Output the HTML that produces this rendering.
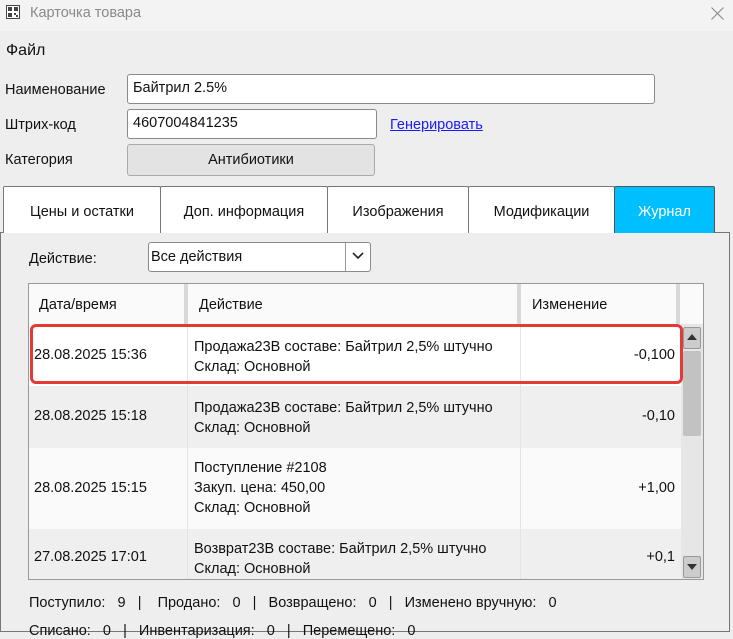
<!DOCTYPE html><html><head><meta charset="utf-8"><style>
*{margin:0;padding:0;box-sizing:border-box}
body{width:733px;height:625px;overflow:hidden;background:#eeeeee;font-family:"Liberation Sans",sans-serif;font-size:14.5px;color:#111;position:relative}
.a{position:absolute;white-space:nowrap}
.box{position:absolute;border:1px solid #8a8a8a;border-radius:3px;background:#fff}
.tab{position:absolute;top:186px;height:47px;border:1px solid #777;border-bottom:none;background:#fff;text-align:center;line-height:50px;font-size:14.5px;border-radius:2px 2px 0 0}
.cell{position:absolute;white-space:nowrap}
</style></head><body>
<div class="a" style="left:0;top:0;width:733px;height:31px;background:#f3f3f3"></div>
<svg class="a" style="left:6px;top:5px" width="14" height="14" viewBox="0 0 14 14"><rect x="0.5" y="0.5" width="13" height="13" fill="#fff" stroke="#444"/><rect x="2" y="2" width="4" height="4" fill="#444"/><rect x="8" y="2" width="4" height="4" fill="#444"/><rect x="2" y="8" width="4" height="4" fill="#444"/><rect x="8" y="8" width="2" height="2" fill="#444"/><rect x="10" y="10" width="2" height="2" fill="#444"/></svg>
<div class="a" style="left:30px;top:5px;color:#8a8a8a;font-size:14.5px">Карточка товара</div>
<svg class="a" style="left:711px;top:7px" width="13" height="13"><path d="M0.5 0.5L12.5 12.5M12.5 0.5L0.5 12.5" stroke="#888" stroke-width="1.1"/></svg>
<div class="a" style="left:6px;top:42px;font-size:16px">Файл</div>
<div class="a" style="left:5px;top:82px">Наименование</div>
<div class="box" style="left:127px;top:74px;width:528px;height:30px"></div>
<div class="a" style="left:133px;top:80px">Байтрил 2.5%</div>
<div class="a" style="left:5px;top:117px">Штрих-код</div>
<div class="box" style="left:127px;top:109px;width:250px;height:30px"></div>
<div class="a" style="left:133px;top:115px">4607004841235</div>
<div class="a" style="left:390px;top:117px;color:#1a1aff;text-decoration:underline">Генерировать</div>
<div class="a" style="left:5px;top:152px">Категория</div>
<div class="box" style="left:127px;top:144px;width:248px;height:32px;background:#e3e3e3;border-color:#aaa;text-align:center;line-height:30px">Антибиотики</div>
<div class="a" style="left:0;top:232px;width:730px;height:400px;border:1px solid #777;background:#eeeeee"></div>
<div class="tab" style="left:3px;width:158px">Цены и остатки</div>
<div class="tab" style="left:160px;width:168px">Доп. информация</div>
<div class="tab" style="left:327px;width:142px">Изображения</div>
<div class="tab" style="left:468px;width:147px">Модификации</div>
<div class="tab" style="left:614px;width:101px;background:#00bfff;color:#fff;border-color:#555">Журнал</div>
<div class="a" style="left:29px;top:251px">Действие:</div>
<div class="box" style="left:148px;top:242px;width:223px;height:30px"></div>
<div class="a" style="left:345px;top:243px;width:1px;height:28px;background:#999"></div>
<div class="a" style="left:151px;top:249px">Все действия</div>
<svg class="a" style="left:352px;top:252px" width="12" height="8"><path d="M1 1L6 6L11 1" fill="none" stroke="#222" stroke-width="1.6"/></svg>
<div class="a" style="left:28px;top:283px;width:676px;height:297px;border:1px solid #999;background:#fafafa;overflow:hidden">
<div class="cell" style="left:0;top:0;width:660px;height:40px;background:#fafafa"></div>
<div class="cell" style="left:155px;top:0;width:4px;height:40px;background:#d8d8d8"></div>
<div class="cell" style="left:488px;top:0;width:4px;height:40px;background:#d8d8d8"></div>
<div class="cell" style="left:647px;top:0;width:4px;height:40px;background:#d8d8d8"></div>
<div class="cell" style="left:10px;top:13px">Дата/время</div>
<div class="cell" style="left:170px;top:13px">Действие</div>
<div class="cell" style="left:503px;top:13px">Изменение</div>
<div class="cell" style="left:0;top:40px;width:652px;height:62px;background:#fff"></div>
<div class="cell" style="left:0;top:102px;width:652px;height:62px;background:#efefef"></div>
<div class="cell" style="left:0;top:164px;width:652px;height:81px;background:#fafafa"></div>
<div class="cell" style="left:0;top:245px;width:652px;height:60px;background:#efefef"></div>
<div class="cell" style="left:158px;top:40px;width:1px;height:260px;background:#e4e4e4"></div>
<div class="cell" style="left:491px;top:40px;width:1px;height:260px;background:#e4e4e4"></div>
<div class="cell" style="left:5px;top:63px">28.08.2025 15:36</div>
<div class="cell" style="left:165px;top:53px;line-height:20px">Продажа23В составе: Байтрил 2,5% штучно<br>Склад: Основной</div>
<div class="cell" style="right:28px;top:63px">-0,100</div>
<div class="cell" style="left:5px;top:124px">28.08.2025 15:18</div>
<div class="cell" style="left:165px;top:114px;line-height:20px">Продажа23В составе: Байтрил 2,5% штучно<br>Склад: Основной</div>
<div class="cell" style="right:28px;top:124px">-0,10</div>
<div class="cell" style="left:5px;top:196px">28.08.2025 15:15</div>
<div class="cell" style="left:165px;top:174px;line-height:20px">Поступление #2108<br>Закуп. цена: 450,00<br>Склад: Основной</div>
<div class="cell" style="right:28px;top:196px">+1,00</div>
<div class="cell" style="left:5px;top:265px">27.08.2025 17:01</div>
<div class="cell" style="left:165px;top:255px;line-height:20px">Возврат23В составе: Байтрил 2,5% штучно<br>Склад: Основной</div>
<div class="cell" style="right:28px;top:265px">+0,1</div>
<div class="cell" style="left:652px;top:40px;width:22px;height:257px;background:#e6e6e6"></div>
<div class="cell" style="left:654px;top:43px;width:18px;height:22px;background:#ccc;border:1px solid #999;border-radius:2px"></div>
<svg class="cell" style="left:658px;top:50px" width="10" height="6"><path d="M0 6L5 0L10 6Z" fill="#333"/></svg>
<div class="cell" style="left:654px;top:67px;width:18px;height:85px;background:#c2c2c2;border-radius:2px"></div>
<div class="cell" style="left:654px;top:272px;width:18px;height:22px;background:#ccc;border:1px solid #999;border-radius:2px"></div>
<svg class="cell" style="left:658px;top:280px" width="10" height="6"><path d="M0 0L5 6L10 0Z" fill="#333"/></svg>
</div>
<div class="a" style="left:30px;top:324px;width:653px;height:60px;border:3px solid #e53935;border-radius:6px"></div>
<div class="a" style="left:29px;top:595px">Поступило:&nbsp;&nbsp; 9&nbsp;&nbsp; |&nbsp;&nbsp;&nbsp; Продано:&nbsp;&nbsp; 0&nbsp;&nbsp; |&nbsp;&nbsp; Возвращено:&nbsp;&nbsp; 0&nbsp;&nbsp; |&nbsp;&nbsp; Изменено вручную:&nbsp;&nbsp; 0</div>
<div class="a" style="left:29px;top:623px">Списано:&nbsp;&nbsp; 0&nbsp;&nbsp; |&nbsp;&nbsp; Инвентаризация:&nbsp;&nbsp; 0&nbsp;&nbsp; |&nbsp;&nbsp; Перемещено:&nbsp;&nbsp; 0</div>
</body></html>
